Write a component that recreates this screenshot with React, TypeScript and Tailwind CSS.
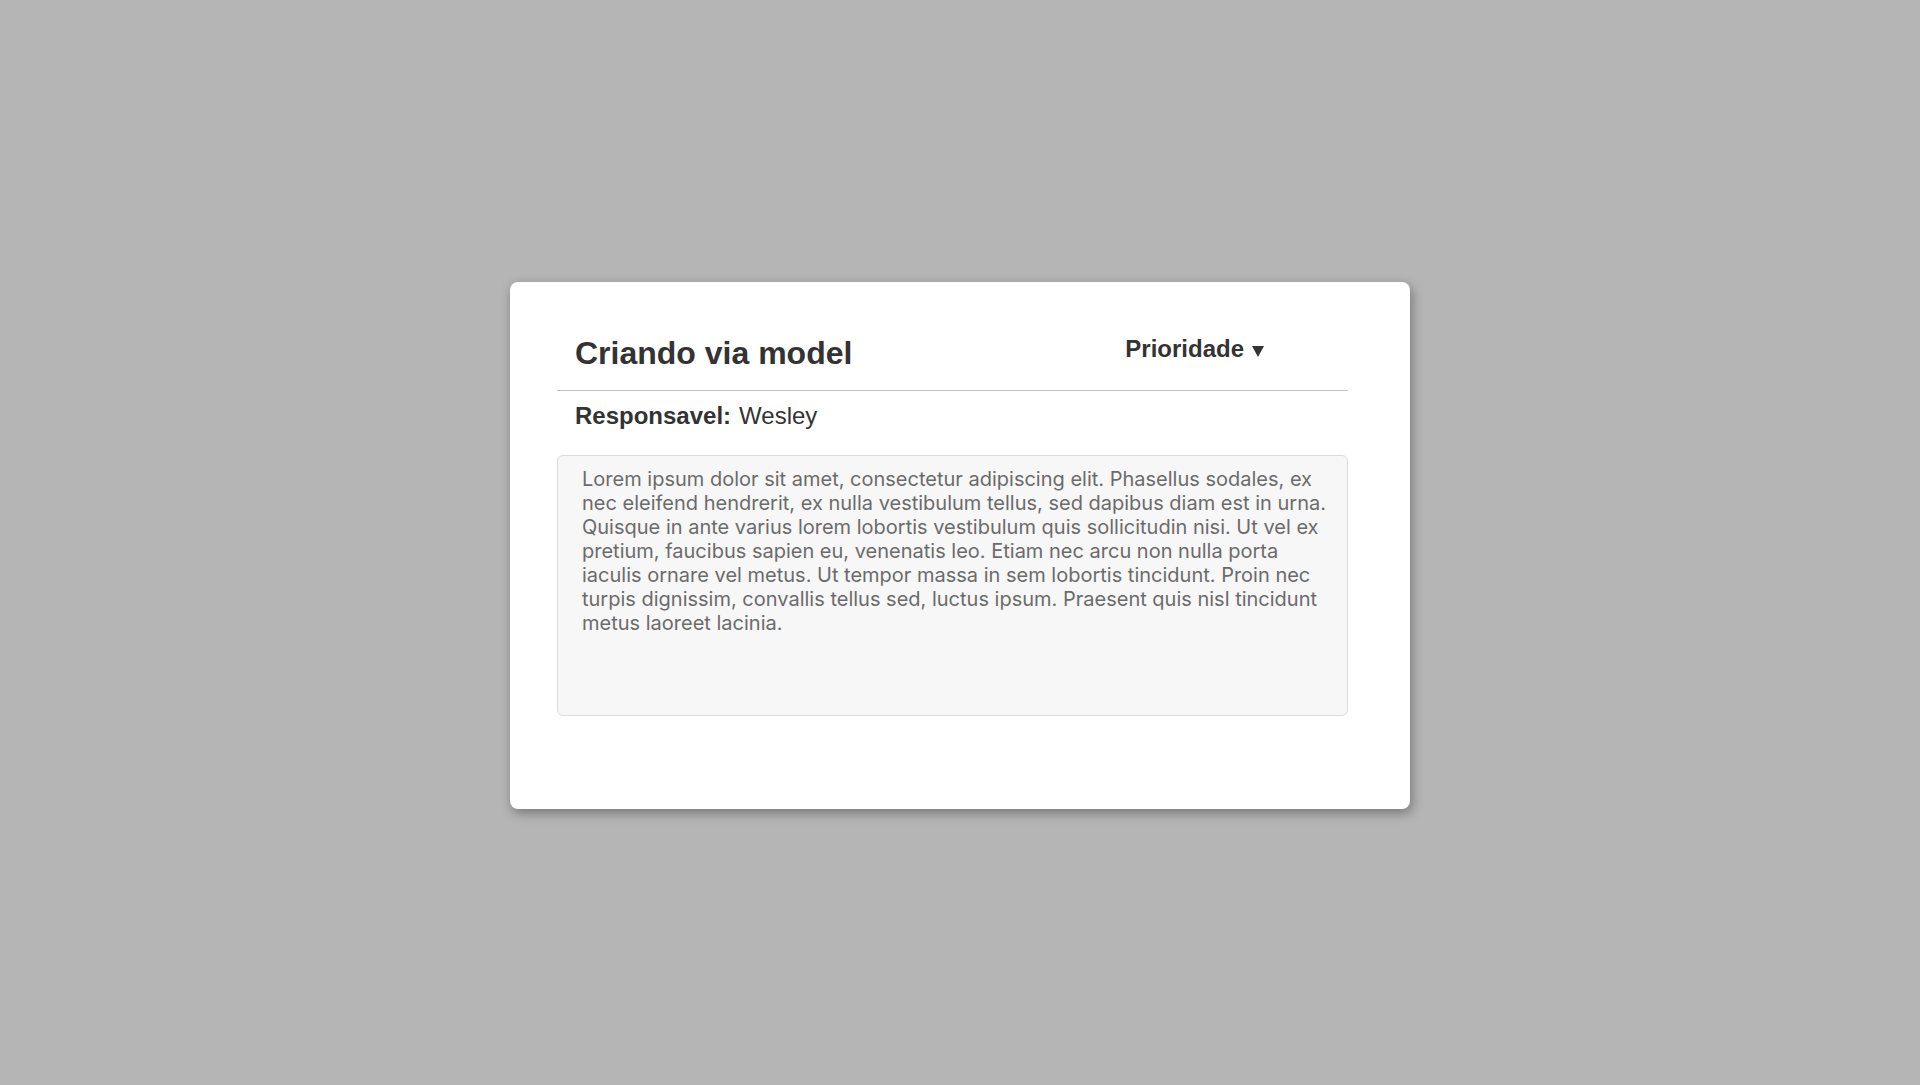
import React from "react";

const LOREM =
  "Lorem ipsum dolor sit amet, consectetur adipiscing elit. Phasellus sodales, ex nec eleifend hendrerit, ex nulla vestibulum tellus, sed dapibus diam est in urna. Quisque in ante varius lorem lobortis vestibulum quis sollicitudin nisi. Ut vel ex pretium, faucibus sapien eu, venenatis leo. Etiam nec arcu non nulla porta iaculis ornare vel metus. Ut tempor massa in sem lobortis tincidunt. Proin nec turpis dignissim, convallis tellus sed, luctus ipsum. Praesent quis nisl tincidunt metus laoreet lacinia.";

function CaretDown() {
  return (
    <svg width="12" height="11" viewBox="0 0 12 11" className="ml-[8px]" fill="#333333">
      <path d="M0 0 H12 L6 11 Z" />
    </svg>
  );
}

export default function App() {
  return (
    <div className="flex min-h-screen items-center justify-center bg-[#b5b5b5] pt-[5px] font-['Liberation_Sans',Arial,sans-serif] text-[#333333]">
      <div className="w-[900px] rounded-[8px] bg-white pt-[55px] pb-[93px] pl-[47px] pr-[62px] shadow-[2px_4px_12px_rgba(0,0,0,0.35)]">
        {/* cabeçalho */}
        <div className="flex items-start justify-between pl-[18px] pr-[84px]">
          <h1 className="text-[32px] font-bold leading-none">Criando via model</h1>
          <button className="flex items-baseline text-[24px] font-bold leading-none">
            Prioridade
            <CaretDown />
          </button>
        </div>

        <div className="mt-[21px] h-px w-full bg-[#c4c4c4]" />

        <p className="mt-[13px] pl-[18px] text-[24px] leading-none">
          <span className="font-bold">Responsavel:</span>
          <span className="ml-2">Wesley</span>
        </p>

        {/* descrição */}
        <div className="mt-[27px] h-[261px] rounded-[6px] border border-[#dcdcdc] bg-[#f7f7f7] pl-6 pr-[19px] pt-[11px] font-['Inter',sans-serif] text-[20px] leading-[24px] text-[#6b6b6b]">
          {LOREM}
        </div>
      </div>
    </div>
  );
}
